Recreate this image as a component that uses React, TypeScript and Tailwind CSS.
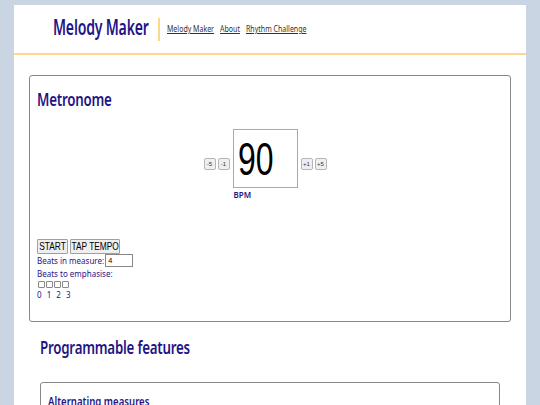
import React from "react";

const font = { fontFamily: '"Noto Sans", "Open Sans", sans-serif' };
const arial = { fontFamily: '"Liberation Sans", Arial, sans-serif' };

function SmallBtn({ label }: { label: string }) {
  return (
    <button className="h-[12px] w-[12px] p-0 rounded-[2px] border border-[#b5b5b5] bg-[#efefef] text-[6px] leading-[10px] text-[#333] flex items-center justify-center" style={arial}>
      {label}
    </button>
  );
}

function BigBtn({ label, w }: { label: string; w: string }) {
  return (
    <button className={`h-[15px] ${w} p-0 rounded-[1px] border border-[#a0a0a0] bg-[#efefef] text-[11px] leading-none text-black flex items-center justify-center whitespace-nowrap overflow-hidden`} style={arial}>
      <span className="inline-block scale-x-[0.76] whitespace-nowrap">{label}</span>
    </button>
  );
}

export default function App() {
  return (
    <div className="min-h-[405px] bg-[#c9d5e3] pl-[14px] pr-[14px] pt-[5px]" style={font}>
      <div className="bg-white min-h-[400px] w-[512px]">
        <header className="h-[50px] border-b-2 border-[#fcd98a] flex items-center pl-[39px]">
          <div className="w-[89px] overflow-visible whitespace-nowrap">
            <span className="inline-block origin-left scale-x-[0.67] text-[21px] font-semibold text-[#1f1585] tracking-[-0.3px] leading-none pb-[2px]">Melody Maker</span>
          </div>
          <div className="w-[2px] h-[23px] bg-[#fcd98a] ml-[16px] mr-[7px]" />
          <nav className="flex text-[9px] text-[#333] whitespace-nowrap">
            <a className="w-[53px]"><span className="inline-block origin-left scale-x-[0.78] underline">Melody Maker</span></a>
            <a className="w-[26px]"><span className="inline-block origin-left scale-x-[0.78] underline">About</span></a>
            <a><span className="inline-block origin-left scale-x-[0.78] underline">Rhythm Challenge</span></a>
          </nav>
        </header>

        <section className="mx-[15px] mt-[20px] h-[247px] border border-[#888] rounded-[3px] px-[7px] pt-[12px]">
          <h1 className="text-[18px] font-semibold text-[#1f1585] leading-[22px] tracking-[-0.3px] whitespace-nowrap">
            <span className="inline-block origin-left scale-x-[0.74]">Metronome</span>
          </h1>
          <div className="flex justify-center mt-[19px] pr-[10px]">
            <div className="flex gap-[2px] mt-[29px] mr-[3px]">
              <SmallBtn label="-5" />
              <SmallBtn label="-1" />
            </div>
            <div className="flex flex-col">
              <div className="w-[65px] h-[59px] border border-[#aaa] flex items-center pl-[4px] text-[47px] text-black leading-none overflow-hidden" style={arial}>
                <span className="inline-block origin-left scale-x-[0.68]">90</span>
              </div>
              <div className="text-[8px] font-semibold text-[#1f1585] mt-[1px] ml-[1px]">BPM</div>
            </div>
            <div className="flex gap-[2px] mt-[29px] ml-[3px]">
              <SmallBtn label="+1" />
              <SmallBtn label="+5" />
            </div>
          </div>
          <div className="mt-[38px] flex gap-[2px]">
            <BigBtn label="START" w="w-[31px]" />
            <BigBtn label="TAP TEMPO" w="w-[50px]" />
          </div>
          <div className="flex items-center text-[8px] text-[#1f1585] leading-[13px]">
            <span>Beats in measure:</span>
            <span className="ml-[1px] w-[28px] h-[13px] border border-[#888] text-[7px] text-black pl-[2px] leading-[11px]">4</span>
          </div>
          <div className="text-[8px] text-[#1f1585] leading-[12px] mt-[1px]">Beats to emphasise:</div>
          <div className="flex gap-[1px] mt-[1px] ml-[1px]">
            {[0, 1, 2, 3].map((i) => (
              <span key={i} className="w-[7px] h-[7px] border border-[#888] rounded-[1px]" />
            ))}
          </div>
          <div className="text-[8px] text-[#1f1585] leading-[12px] mt-[1px] tracking-[1.5px]">0 1 2 3</div>
        </section>

        <h2 className="ml-[26px] mt-[14px] text-[18px] font-semibold text-[#1f1585] leading-[22px] tracking-[-0.3px] whitespace-nowrap">
          <span className="inline-block origin-left scale-x-[0.74]">Programmable features</span>
        </h2>
        <section className="ml-[26px] mr-[26px] mt-[24px] border border-[#888] rounded-[3px] px-[7px] pt-[12px] h-[40px]">
          <h3 className="text-[12px] font-semibold text-[#1f1585] leading-[14px] whitespace-nowrap">
            <span className="inline-block origin-left scale-x-[0.8]">Alternating measures</span>
          </h3>
        </section>
      </div>
    </div>
  );
}
